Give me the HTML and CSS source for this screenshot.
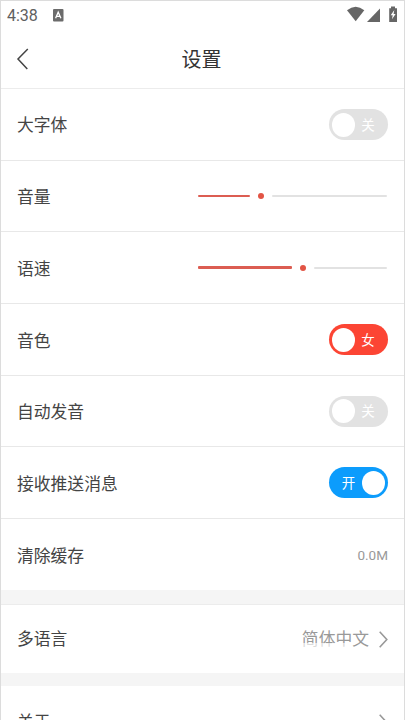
FILE: index.html
```html
<!DOCTYPE html>
<html lang="zh-CN">
<head>
<meta charset="utf-8">
<title>设置</title>
<link rel="stylesheet" href="styles.css">
</head>
<body>
<div class="screen">
  <div class="status">
    <span class="time">4:38</span>
    <svg class="ime" width="11" height="13" viewBox="0 0 11 13"><rect width="10.5" height="12.5" rx="1" fill="#6b6b6b"/><path d="M2.6 9.3 5.2 3.2 7.9 9.3M3.6 7.4H6.9" fill="none" stroke="#fff" stroke-width="1.3"/></svg>
    <svg class="signals" width="52" height="17" viewBox="0 0 52 17"><path d="M0 4.2Q8.7-2.8 17.3 4.2L8.7 15.2Z" fill="#666"/><path d="M20 16 33 2.5V16Z" fill="#666"/><path d="M42.2 2.2H44V.5h4v1.7h2V16h-7.8Z" fill="#666"/><path d="m47.3 4-3.6 5.2h2L45 13.3l3.6-5.4h-2Z" fill="#fff"/></svg>
  </div>
  <header class="header">
    <svg class="back" width="13" height="22" viewBox="0 0 13 22"><path d="M11.8 1 2 11 11.3 21" fill="none" stroke="#444" stroke-width="1.5"/></svg>
    <h1>设置</h1>
  </header>
  <main>
    <section class="group">
      <div class="row"><span class="label">大字体</span><span class="switch off"><i></i><b>关</b></span></div>
      <div class="row short"><span class="label">音量</span><span class="slider volume"><i class="done"></i><i class="dot"></i><i class="rest"></i></span></div>
      <div class="row"><span class="label">语速</span><span class="slider speed"><i class="done"></i><i class="dot"></i><i class="rest"></i></span></div>
      <div class="row"><span class="label">音色</span><span class="switch voice"><i></i><b>女</b></span></div>
      <div class="row short"><span class="label">自动发音</span><span class="switch off"><i></i><b>关</b></span></div>
      <div class="row"><span class="label">接收推送消息</span><span class="switch on"><b>开</b><i></i></span></div>
      <div class="row last"><span class="label">清除缓存</span><span class="size">0.0M</span></div>
    </section>
    <section class="group">
      <div class="row language"><span>多语言</span><span class="value"><span class="faded">简体中文</span><svg width="9" height="17" viewBox="0 0 9 17"><path d="M.7.8 7.8 8.5.7 16.2" fill="none" stroke="#999" stroke-width="1.6"/></svg></span></div>
    </section>
    <section class="group">
      <div class="row about"><span>关于</span><span class="value"><svg width="9" height="17" viewBox="0 0 9 17"><path d="M.7.8 7.8 8.5.7 16.2" fill="none" stroke="#999" stroke-width="1.6"/></svg></span></div>
    </section>
  </main>
</div>
</body>
</html>
```
FILE: styles.css
```css
* { box-sizing: border-box; }
body {
  margin: 0;
  overflow: hidden;
  background: #fff;
  color: #444;
  font-family: Roboto, "Noto Sans CJK SC", sans-serif;
}
svg { display: block; flex: none; }
.screen {
  height: 720px;
  overflow: hidden;
  border: 1px solid #dcdcdc;
  border-bottom: 0;
}
.status {
  display: flex;
  align-items: center;
  height: 29px;
  padding: 0 5px 0 6px;
}
.time { width: 46px; font-size: 16px; line-height: 29px; color: #606060; }
.signals { margin-left: auto; margin-top: -3px; }
.ime { margin-top: -1px; }
.header {
  display: grid;
  grid-template-columns: 40px 1fr 40px;
  align-items: center;
  height: 59px;
  border-bottom: 1px solid #ececec;
}
.back { margin-left: 15px; }
.header h1 {
  margin: 0;
  padding: 2px 2px 0 0;
  text-align: center;
  font-size: 20px;
  font-weight: 400;
  line-height: 30px;
  color: #333;
}
main { background: #f5f5f5; }
.group { background: #fff; }
.group + .group { margin-top: 14px; }
.row {
  display: flex;
  align-items: center;
  justify-content: space-between;
  height: 72px;
  padding: 0 16px;
  border-bottom: 1px solid #e8e8e8;
  font-size: 16.8px;
  line-height: 26px;
}
.label { padding-top: 2px; }
.row:first-child .label { padding-top: 1px; }
.short { height: 71px; }
.last { height: 71px; border-bottom: 0; }
.language { height: 69px; border-top: 1px solid #ececec; border-bottom: 0; }
.group:last-child { margin-top: 13px; }
.about { border: 0; }
.switch {
  display: flex;
  align-items: center;
  width: 59px;
  height: 31px;
  padding: 0 4px 0 3px;
  border-radius: 16px;
  color: #fff;
}
.switch i { width: 23px; height: 24px; border-radius: 50%; background: #fff; }
.switch b { flex: 1; text-align: center; font-size: 13.5px; font-weight: 400; line-height: 20px; }
.switch i + b { padding-right: 3px; }
.off { background: #e2e2e2; }
.voice { background: #fc4534; }
.on { padding: 0 3px 0 6px; background: #0c9cfc; }
.slider { display: flex; align-items: center; justify-content: space-between; width: 189px; margin-right: 1px; }
.slider i { height: 2px; border-radius: 1px; }
.slider .dot { width: 6px; height: 6px; border-radius: 50%; background: #e25445; }
.done { background: #dc5d52; }
.rest { background: #e2e2e2; }
.volume .done { width: 52px; }
.volume .rest { width: 115px; }
.speed .done { width: 94px; height: 3px; }
.speed .rest { width: 73px; }
.size { padding-top: 1px; font-size: 13.5px; color: #999; }
.value { display: flex; align-items: center; gap: 10px; color: #999; }
.faded { position: relative; }
.faded::after {
  content: "";
  position: absolute;
  left: 0;
  top: 17px;
  width: 50px;
  height: 7px;
  background: #fff;
  opacity: .65;
}
```
